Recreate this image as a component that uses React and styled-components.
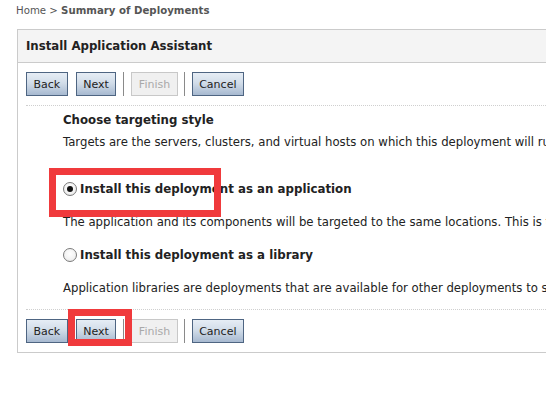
import React from "react";
import styled, { createGlobalStyle } from "styled-components";

const Global = createGlobalStyle`
  html, body { margin: 0; padding: 0; background: #fff; overflow: hidden; }
  body { font-family: Tahoma, "DejaVu Sans", Verdana, sans-serif; color: #222; }
`;

const Page = styled.div`
  position: relative;
  width: 546px;
  height: 404px;
  overflow: hidden;
  padding: 4px 0 0 16px;
  box-sizing: border-box;
`;

const Crumbs = styled.div`
  font-size: 10.2px;
  line-height: 14px;
  color: #555;
  white-space: nowrap;
  b { font-weight: bold; }
`;

const Panel = styled.div`
  margin: 11px 0 0 1px;
  width: 760px;
  border: 1px solid #cbcbcb;
  border-right: none;
`;

const Header = styled.div`
  height: 32px;
  background: #f4f4f4;
  border-bottom: 1px solid #cbcbcb;
  display: flex;
  align-items: center;
  padding-left: 8px;
  font-size: 11.75px;
  font-weight: bold;
  color: #222;
`;

const Toolbar = styled.div`
  display: flex;
  align-items: center;
  padding: 9px 8px;
`;

const Button = styled.button`
  height: 24px;
  padding: 0 6.5px;
  margin-right: ${(p) => (p.$gap != null ? p.$gap : 8)}px;
  font-family: inherit;
  font-size: 11px;
  color: ${(p) => (p.disabled ? "#a9a9a9" : "#222")};
  border: 1px solid ${(p) => (p.disabled ? "#c8c8c8" : "#4e6582")};
  background: ${(p) =>
    p.disabled
      ? "#f0f0f0"
      : "linear-gradient(to bottom, #e6edf5 0%, #d2dde9 45%, #a7b9d0 100%)"};
  border-radius: 0;
  box-sizing: border-box;
  cursor: default;
`;

const Sep = styled.span`
  width: 1px;
  height: 24px;
  background: #8a8a8a;
  margin-right: 7px;
`;

const Dotted = styled.div`
  margin-left: 8px;
  border-top: 1px dotted #cfcfcf;
`;

const Content = styled.div`
  padding: 6px 0 13px 45px;
  font-size: 11.7px;
  line-height: 16px;
  white-space: nowrap;
`;

const Title = styled.div`
  font-size: 11.75px;
  font-weight: bold;
`;

const Text = styled.div`
  margin-top: ${(p) => p.$mt}px;
`;

const RadioRow = styled.div`
  margin-top: ${(p) => p.$mt}px;
  display: flex;
  align-items: center;
  font-size: 11.8px;
  font-weight: bold;
  height: 16px;
`;

const Radio = styled.span`
  width: 12px;
  height: 12px;
  border: 1px solid #7a7a7a;
  border-radius: 50%;
  background: radial-gradient(circle at 50% 40%, #ffffff 0%, #f2f2f2 60%, #dcdcdc 100%);
  margin-right: 3px;
  display: flex;
  align-items: center;
  justify-content: center;
  flex: none;
  &::after {
    content: "";
    width: 6px;
    height: 6px;
    border-radius: 50%;
    background: ${(p) => (p.$checked ? "#111" : "transparent")};
  }
`;

const Highlight = styled.div`
  position: absolute;
  border: 7px solid #f03a3c;
  box-sizing: border-box;
  pointer-events: none;
`;

function Buttons() {
  return (
    <Toolbar>
      <Button>Back</Button>
      <Button $gap={7}>Next</Button>
      <Sep />
      <Button disabled $gap={6}>Finish</Button>
      <Sep />
      <Button>Cancel</Button>
    </Toolbar>
  );
}

export default function App() {
  return (
    <>
      <Global />
      <Page>
        <Crumbs>
          Home &gt; <b>Summary of Deployments</b>
        </Crumbs>
        <Panel>
          <Header>Install Application Assistant</Header>
          <Buttons />
          <Dotted />
          <Content>
            <Title>Choose targeting style</Title>
            <Text $mt={6}>
              Targets are the servers, clusters, and virtual hosts on which this deployment will run. There are several ways you can target an application.
            </Text>
            <RadioRow $mt={31}>
              <Radio $checked />
              Install this deployment as an application
            </RadioRow>
            <Text $mt={17}>
              The application and its components will be targeted to the same locations. This is the most common usage.
            </Text>
            <RadioRow $mt={17}>
              <Radio />
              Install this deployment as a library
            </RadioRow>
            <Text $mt={17}>
              Application libraries are deployments that are available for other deployments to share. Libraries should be available on all of the targets running their referencing applications.
            </Text>
          </Content>
          <Dotted />
          <Buttons />
        </Panel>
        <Highlight style={{ left: 49, top: 168, width: 172, height: 49 }} />
        <Highlight style={{ left: 68, top: 309, width: 64, height: 37 }} />
      </Page>
    </>
  );
}
